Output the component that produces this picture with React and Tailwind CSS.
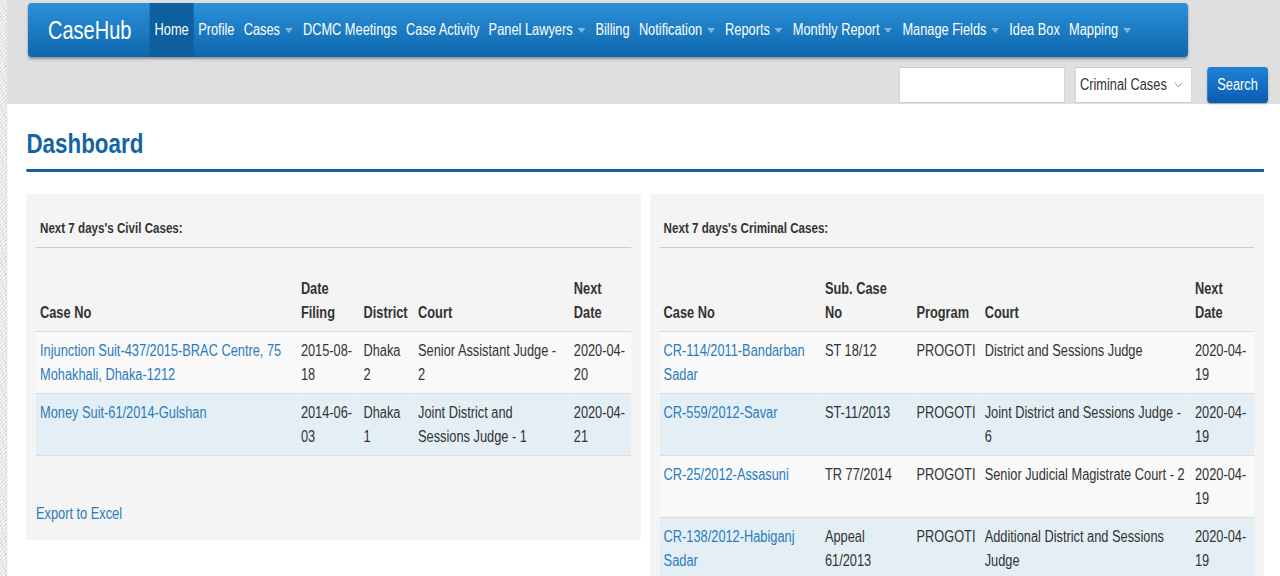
import { ChevronDown } from 'lucide-react';

// The page is laid out on a 1600px-wide canvas and squeezed to 1280px,
// which gives the narrow letterforms of the original.

const navItems = [
  { label: 'Home', active: true },
  { label: 'Profile' },
  { label: 'Cases', caret: true },
  { label: 'DCMC Meetings' },
  { label: 'Case Activity' },
  { label: 'Panel Lawyers', caret: true },
  { label: 'Billing' },
  { label: 'Notification', caret: true },
  { label: 'Reports', caret: true },
  { label: 'Monthly Report', caret: true },
  { label: 'Manage Fields', caret: true },
  { label: 'Idea Box' },
  { label: 'Mapping', caret: true },
];

const civilCols = [
  { label: ['Case No'], w: 'w-[325px]' },
  { label: ['Date', 'Filing'], w: 'w-[78px]' },
  { label: ['District'], w: 'w-[68px]' },
  { label: ['Court'], w: 'w-[194px]' },
  { label: ['Next', 'Date'], w: 'w-[76px]' },
];

const civilRows = [
  ['Injunction Suit-437/2015-BRAC Centre, 75 Mohakhali, Dhaka-1212', '2015-08-18', 'Dhaka 2', 'Senior Assistant Judge - 2', '2020-04-20'],
  ['Money Suit-61/2014-Gulshan', '2014-06-03', 'Dhaka 1', 'Joint District and Sessions Judge - 1', '2020-04-21'],
];

const criminalCols = [
  { label: ['Case No'], w: 'w-[201px]' },
  { label: ['Sub. Case', 'No'], w: 'w-[114px]' },
  { label: ['Program'], w: 'w-[85px]' },
  { label: ['Court'], w: 'w-[262px]' },
  { label: ['Next', 'Date'], w: 'w-[79px]' },
];

const criminalRows = [
  ['CR-114/2011-Bandarban Sadar', 'ST 18/12', 'PROGOTI', 'District and Sessions Judge', '2020-04-19'],
  ['CR-559/2012-Savar', 'ST-11/2013', 'PROGOTI', 'Joint District and Sessions Judge - 6', '2020-04-19'],
  ['CR-25/2012-Assasuni', 'TR 77/2014', 'PROGOTI', 'Senior Judicial Magistrate Court - 2', '2020-04-19'],
  ['CR-138/2012-Habiganj Sadar', 'Appeal 61/2013', 'PROGOTI', 'Additional District and Sessions Judge', '2020-04-19'],
];

const CaseTable = ({ cols, rows }) => (
  <table className="w-full border-collapse mt-[21px] table-fixed">
    <thead>
      <tr className="border-b border-[#dcdcdc]">
        {cols.map((c, i) => (
          <th key={i} className={`${c.w} text-left align-bottom px-[5px] pt-[8px] pb-[6px] font-bold`}>
            {c.label.map((l) => (
              <div key={l}>{l}</div>
            ))}
          </th>
        ))}
      </tr>
    </thead>
    <tbody>
      {rows.map((r, i) => (
        <tr key={i} className={`border-b border-[#dcdcdc] ${i % 2 === 1 ? 'bg-[#e4eff5]' : 'bg-[#f9f9f9]'}`}>
          {r.map((cell, j) => (
            <td key={j} className={`align-top px-[5px] pt-[7px] pb-[6px] ${j === 0 ? 'text-[#2a7bbd]' : ''}`}>
              {cell}
            </td>
          ))}
        </tr>
      ))}
    </tbody>
  </table>
);

const Panel = ({ title, children }) => (
  <div className="bg-[#f4f4f4] px-[12px] pt-[24px]">
    <div className="px-[5px] text-[14.5px] leading-[20px] font-bold pb-[9px]">{title}</div>
    <div className="border-t border-[#cccccc]" />
    {children}
  </div>
);

export default function App() {
  return (
    <div className="w-[1280px] h-[576px] overflow-hidden bg-white">
      <div
        className="w-[1600px] min-h-[576px] origin-top-left scale-x-[0.8] flex bg-white text-[#333] text-[16px] leading-[24px]"
        style={{ fontFamily: '"Liberation Sans", Arial, sans-serif' }}
      >
        {/* hatched page edge */}
        <div className="w-[9px] shrink-0 border-r border-[#d4d4d4] bg-[repeating-linear-gradient(135deg,#d6d6d6_0px,#d6d6d6_1px,#f3f3f3_1px,#f3f3f3_3px)]" />

        <div className="flex-1 flex flex-col">
          {/* top gray band */}
          <div className="bg-[#dfdfdf] h-[104px] pt-[3px] pl-[26px] pr-[15px]">
            <div className="w-[1450px] h-[54px] rounded-[4px] bg-gradient-to-b from-[#2c91d8] to-[#0b67ad] shadow-[0_2px_3px_rgba(0,0,0,0.35)] flex items-stretch text-white">
              <div className="pl-[25px] pr-[23px] flex items-center text-[25px] leading-none">CaseHub</div>
              <nav className="flex items-stretch">
                {navItems.map((n) => (
                  <div
                    key={n.label}
                    className={`flex items-center px-[5.8px] text-[16px] ${n.active ? 'bg-[#0d5f9d] px-[6px]' : ''}`}
                  >
                    {n.label}
                    {n.caret && (
                      <span className="ml-[6px] mr-[1px] w-0 h-0 border-l-[5px] border-r-[5px] border-t-[5px] border-l-transparent border-r-transparent border-t-[#80b6e0]" />
                    )}
                  </div>
                ))}
              </nav>
            </div>

            <div className="flex justify-end items-center mt-[10px] h-[36px]">
              <div className="w-[207px] h-[36px] bg-white border border-[#cccccc]" />
              <div className="ml-[13px] w-[146px] h-[36px] bg-white border border-[#cccccc] flex items-center justify-between pl-[5px] pr-[8px]">
                <span>Criminal Cases</span>
                <ChevronDown className="w-[16px] h-[16px] text-[#777]" strokeWidth={1.25} />
              </div>
              <button className="ml-[19px] w-[76px] h-[36px] rounded-[4px] bg-gradient-to-b from-[#1f82d6] to-[#0a5cb0] text-white shadow-[0_1px_2px_rgba(0,0,0,0.3)]">
                Search
              </button>
            </div>
          </div>

          {/* content */}
          <div className="pl-[24px] pr-[20px]">
            <h1 className="text-[28px] leading-[34px] font-bold text-[#1463a3] pt-[23px] pb-[8px] border-b-[3px] border-[#15609b]">
              Dashboard
            </h1>

            <div className="grid grid-cols-2 gap-[12px] mt-[22px] items-start">
              <Panel title="Next 7 days's Civil Cases:">
                <CaseTable cols={civilCols} rows={civilRows} />
                <div className="pt-[46px] pb-[14px] text-[#2a7bbd]">Export to Excel</div>
              </Panel>
              <Panel title="Next 7 days's Criminal Cases:">
                <CaseTable cols={criminalCols} rows={criminalRows} />
              </Panel>
            </div>
          </div>
        </div>
      </div>
    </div>
  );
}
